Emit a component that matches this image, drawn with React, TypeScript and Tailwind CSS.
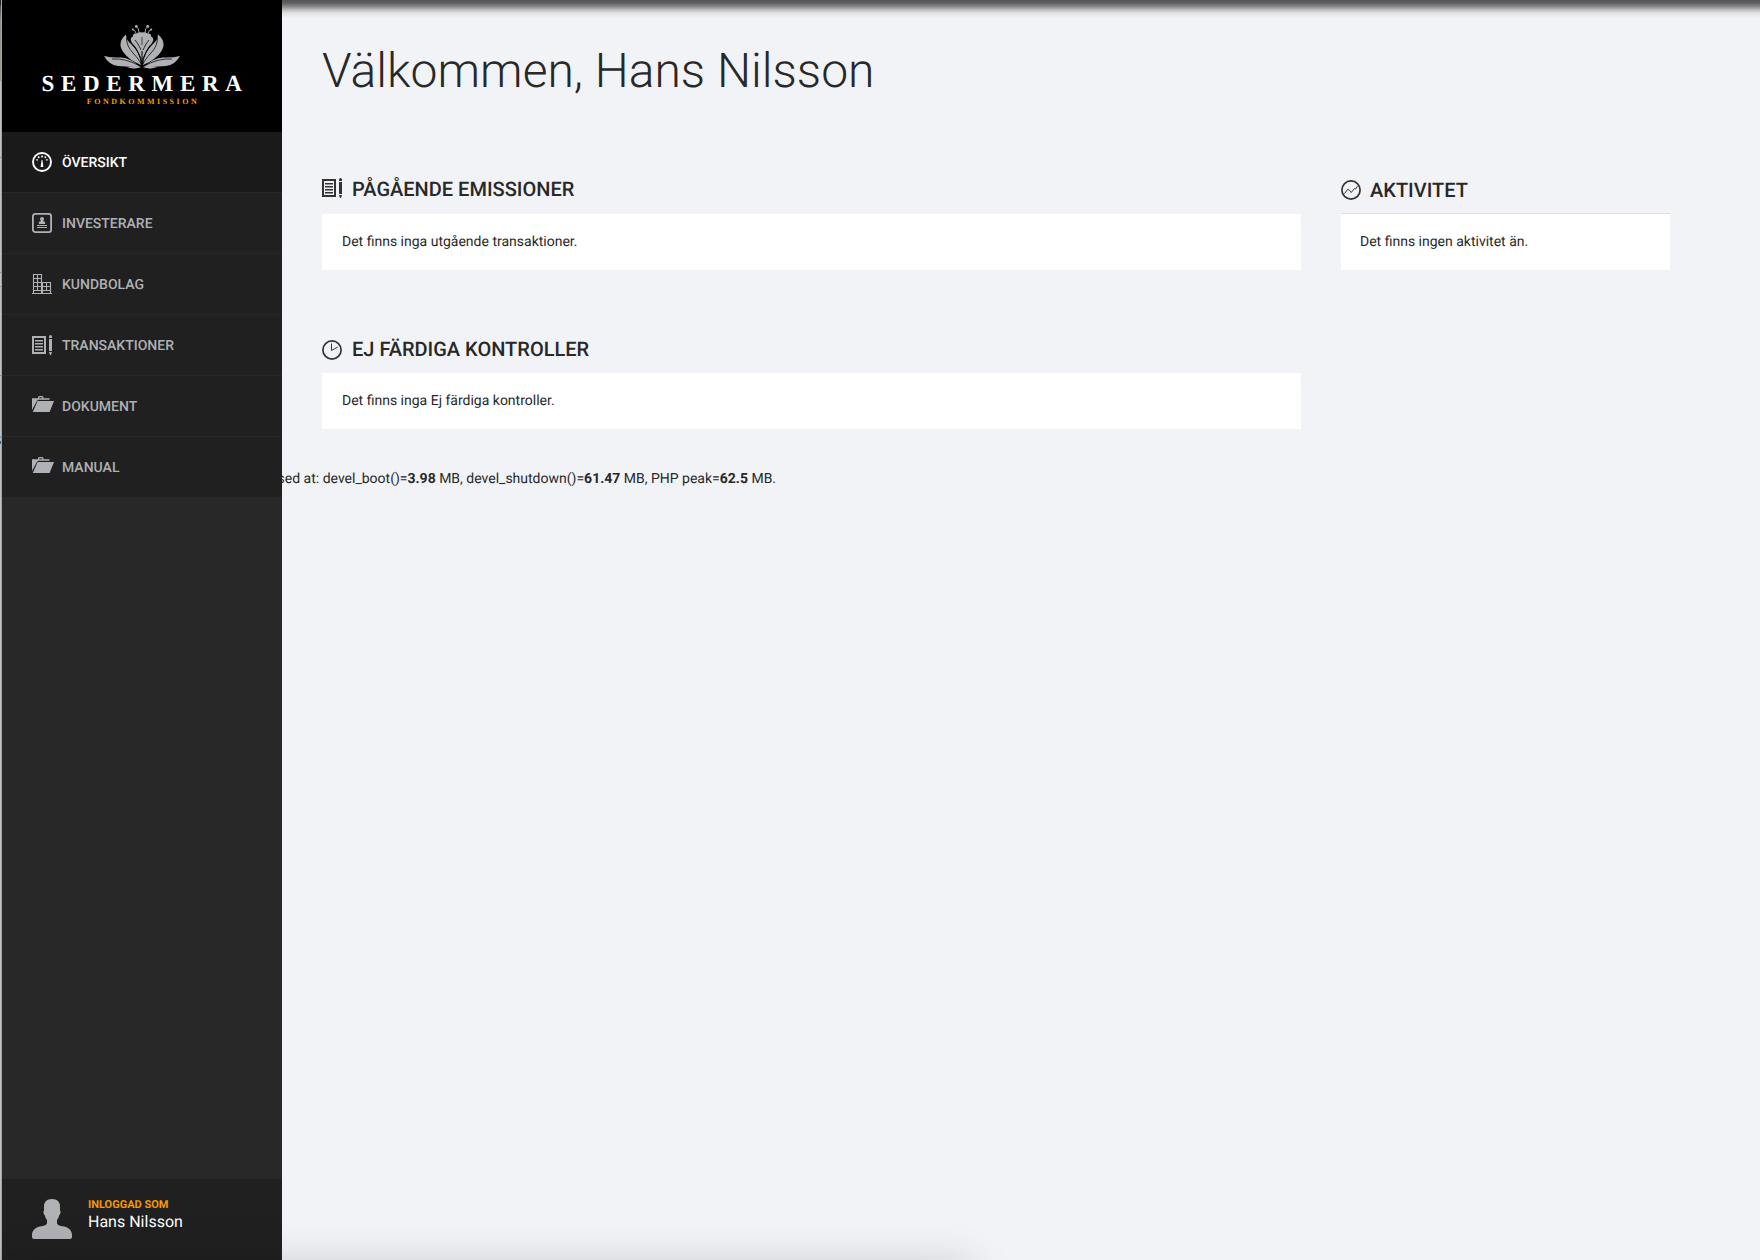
import React from "react";

const navIcon = "mt-[2px] h-[22px] w-[22px] shrink-0";

function GaugeIcon() {
  return (
    <svg className={navIcon} viewBox="0 0 22 22" fill="currentColor">
      <circle cx="10" cy="10" r="9" fill="none" stroke="currentColor" strokeWidth="1.9" />
      <path d="M9.6 8h.8l1 7H8.600z" />
      <circle cx="10" cy="4.600" r="1" />
      <circle cx="6.700" cy="5.300" r=".95" />
      <circle cx="13.300" cy="5.300" r=".95" />
      <circle cx="5.100" cy="7.800" r=".85" />
      <circle cx="14.900" cy="7.800" r=".85" />
    </svg>
  );
}

function InvestorIcon() {
  return (
    <svg className={navIcon} viewBox="0 0 22 22" fill="currentColor">
      <rect x=".9" y=".9" width="18.200" height="18.200" rx="2.400" fill="none" stroke="currentColor" strokeWidth="1.800" />
      <circle cx="10" cy="5.900" r="2" />
      <path d="M9 7h2v1.300h1.200l.9 1V11H6.900V9.300l.9-1H9z" />
      <path d="M5 12h10v1H5zM5 14h10v1H5z" />
    </svg>
  );
}

function BuildingIcon() {
  return (
    <svg className={navIcon} viewBox="0 0 22 22" fill="none" stroke="currentColor" strokeWidth="1.1">
      <path d="M1.500 19V.5h8V19M5.500.5V17M1.500 4.500h8M1.500 8.500h17V19M1.500 12.500h17M1.500 16.500h17M10.500 8.500V19M14.500 8.500V17M0 19.500h20" />
    </svg>
  );
}

function TransactionIcon({ className }: { className: string }) {
  return (
    <svg className={className} viewBox="0 0 22 22" fill="currentColor">
      <rect x="1" y="2" width="12" height="16" fill="none" stroke="currentColor" strokeWidth="2" />
      <path d="M3 5h8v1.400H3zM3 8h8v1.400H3zM3 11h8v1.400H3zM3 14h8v1.400H3z" />
      <path d="M17 2q0-2 1.500-2T20 2v1h-3zM17 4h3v12h-3zM17 17h3l-1 3h-1z" />
    </svg>
  );
}

function FolderIcon() {
  return (
    <svg className={navIcon} viewBox="0 0 22 22" fill="currentColor">
      <path d="M0 2.200h6V1l1-1h3.500l1 1v1.200h6v1.600H6.200L4.900 4.900 0 14zM7.200 1.200v1h3v-1z" fillRule="evenodd" />
      <path d="M5.600 5H22l-4.400 11H.8z" />
    </svg>
  );
}

function ClockIcon() {
  return (
    <svg className="h-5 w-5" viewBox="0 0 20 20" fill="none" stroke="currentColor">
      <circle cx="10" cy="10" r="9.100" strokeWidth="1.700" />
      <path d="M9.500 3.500v7l6-3.400" strokeWidth="1" />
    </svg>
  );
}

function ActivityIcon() {
  return (
    <svg className="h-5 w-5" viewBox="0 0 20 20" fill="none" stroke="currentColor">
      <circle cx="10" cy="10" r="9.100" strokeWidth="1.700" />
      <path d="M3.500 13.500l3.300-4.200 1.700 1 1.700 2.200 3.300-4 1 .6 2-3" strokeWidth="1" />
    </svg>
  );
}

function FlowerHalf() {
  return (
    <>
      <path d="M37 40Q25 35 20 28Q12 18 22 9.500Q22 15 27 19Q36 27 37 40Z" />
      <path d="M37.500 36Q35 25 28 18Q25 13 29 11.500Q28 8.500 33 8.300Q35 6.500 38.200 7.500V30Z" />
      <path d="M36 42Q27 33 17 32.500Q8 33 0 31Q5 40 14 41Q26 42 36 42Z" />
      <path d="M23 42.200Q29 40.500 37.500 42Q33 43.800 29 43.400Z" />
      <g fill="none" stroke="#000" strokeWidth=".75">
        <path d="M22.500 13Q22.500 21 29 28T37 39M26 17Q33 23 37 34M31 15Q34 18 37 25M8 34Q21 33 35 40.500" />
      </g>
      <path d="M35 8Q35 3 32.500 1.800M32 8Q31 5 28.500 4.500" fill="none" stroke="currentColor" strokeWidth=".9" />
      <circle cx="32.300" cy="1.400" r="1.400" />
      <circle cx="28.800" cy="4.400" r="1" />
    </>
  );
}

function Logo() {
  return (
    <div className="flex h-[132px] flex-col items-center bg-black pt-[25px]">
      <svg className="h-[44px] w-[76px] text-[#afb1b5]" viewBox="0 0 76 44" fill="currentColor">
        <FlowerHalf />
        <g transform="translate(76 0) scale(-1 1)">
          <FlowerHalf />
        </g>
        <path d="M37.700 12v8h.6v-8zM37.500 26v17h1V26z" fill="#000" />
      </svg>
      <div className="mt-[2px] h-[26px] pl-[6px] font-['Liberation_Serif',serif] text-[23px] leading-[26px] font-bold tracking-[6.65px] text-white">
        SEDERMERA
      </div>
      <div className="pl-[2px] font-['Liberation_Serif',serif] text-[8px] leading-[10px] font-bold tracking-[2.5px] text-[#f49b00]">
        FONDKOMMISSION
      </div>
    </div>
  );
}

const items = [
  { label: "ÖVERSIKT", icon: <GaugeIcon />, active: true },
  { label: "INVESTERARE", icon: <InvestorIcon /> },
  { label: "KUNDBOLAG", icon: <BuildingIcon /> },
  { label: "TRANSAKTIONER", icon: <TransactionIcon className={navIcon} /> },
  { label: "DOKUMENT", icon: <FolderIcon /> },
  { label: "MANUAL", icon: <FolderIcon /> },
];

function Sidebar() {
  return (
    <aside className="relative z-10 flex w-[280px] shrink-0 flex-col bg-[#282828]">
      <Logo />
      <nav>
        {items.map((item) => (
          <a
            key={item.label}
            className={
              item.active
                ? "flex h-[61px] items-center gap-2 border-b border-[#282828] bg-[#1a1a1a] pl-[30px] text-sm font-medium text-white"
                : "flex h-[61px] items-center gap-2 border-b border-[#282828] bg-[#202020] pl-[30px] text-sm font-medium text-[#afb1b5]"
            }
          >
            {item.icon}
            <span className="pt-[2px]">{item.label}</span>
          </a>
        ))}
      </nav>
      <div className="mt-auto flex h-[81px] bg-[#202020] pt-[20px] pl-[30px]">
        <svg className="h-10 w-10 text-[#afb1b5]" viewBox="0 0 40 40" fill="currentColor">
          <path d="M20 0C15 0 12 2.800 12 7v4.500c-1 .3-.6 4 .8 4.700.5 2 1.200 3.700 2.200 4.800V24c0 2-3 3-7 3.400C2.500 28.500 0 32 0 36v2q0 2 2 2h36q2 0 2-2v-2c0-4-2.500-7.500-8-8.600-4-.4-7-1.400-7-3.400v-3c1-1.100 1.700-2.800 2.200-4.800 1.400-.7 1.800-4.400.8-4.700V7c0-4.200-3-7-8-7z" />
        </svg>
        <div className="pl-4">
          <div className="text-[11px] leading-[11px] font-bold text-[#f49b00]">INLOGGAD SOM</div>
          <div className="text-base leading-6 text-white">Hans Nilsson</div>
        </div>
      </div>
    </aside>
  );
}

function WindowEdge() {
  return (
    <div className="flex w-[2px] shrink-0 flex-col border-r border-[#a4a5a5] bg-[#c0c2c2]">
      <div className="h-[5px] bg-[#222]" />
      <div className="h-[76px] bg-linear-to-b from-[#4a4a48] via-[#8f8f88] via-20% to-[#9b9b90]" />
      <div className="mt-[76px] h-px bg-[#858686]" />
      <div className="mt-[114px] h-px bg-[#858686]" />
      <div className="mt-[13px] h-px bg-[#858686]" />
      <div className="mt-[88px] h-px bg-[#858686]" />
      <div className="mt-[60px] h-[2px] bg-[#6f9dbd]" />
      <div className="mt-[3px] h-[3px] bg-[#1b6ba5]" />
    </div>
  );
}

export default function App() {
  return (
    <div className="relative flex h-[1260px] w-[1760px] overflow-hidden bg-[#f2f3f7] font-['Roboto',sans-serif] text-[#282828] [text-rendering:geometricPrecision]">
      <WindowEdge />
      <Sidebar />
      <main className="flex-1 pl-10">
        <h1 className="pt-[39px] text-[48px] leading-[64px] font-light">Välkommen, Hans Nilsson</h1>
        <div className="flex gap-10 pt-[71px]">
          <div className="w-[979px]">
            <h2 className="flex h-[40px] gap-2 text-xl leading-7 font-medium">
              <TransactionIcon className="mt-1 h-[22px] w-[22px] text-[#333]" />
              <span className="pt-px">PÅGÅENDE EMISSIONER</span>
            </h2>
            <div className="h-14 bg-white px-5 pt-[18px] text-sm leading-5">Det finns inga utgående transaktioner.</div>
            <h2 className="mt-[65px] flex h-[38px] items-start gap-[10px] text-xl leading-7 font-medium">
              <span className="pt-[5px] text-[#333]"><ClockIcon /></span>
              EJ FÄRDIGA KONTROLLER
            </h2>
            <div className="h-14 bg-white px-5 pt-[18px] text-sm leading-5">Det finns inga Ej färdiga kontroller.</div>
            <div className="mt-[40px] -ml-[107px] text-sm leading-5 whitespace-nowrap">
              Memory used at: devel_boot()=<b>3.98</b> MB, devel_shutdown()=<b>61.47</b> MB, PHP peak=<b>62.5</b> MB.
            </div>
          </div>
          <div className="w-[329px]">
            <h2 className="flex h-[39px] gap-[9px] pt-px text-xl leading-7 font-medium">
              <span className="pt-[5px] text-[#333]"><ActivityIcon /></span>
              <span className="pt-px">AKTIVITET</span>
            </h2>
            <div className="h-[57px] border-t border-[#dddfe2] bg-white px-[19px] pt-[18px] text-sm leading-5">Det finns ingen aktivitet än.</div>
          </div>
        </div>
      </main>
      <div className="pointer-events-none absolute top-0 right-0 left-[282px] h-[18px] bg-[linear-gradient(to_bottom,rgba(0,0,0,.66),rgba(0,0,0,.6)_3px,rgba(0,0,0,.41)_7px,rgba(0,0,0,.22)_10px,rgba(0,0,0,.08)_13px,transparent)]" />
      <div className="pointer-events-none absolute top-[1264px] left-0 z-20 h-20 w-[972px] shadow-[0_0_44px_rgba(0,0,0,.17)]" />
    </div>
  );
}
